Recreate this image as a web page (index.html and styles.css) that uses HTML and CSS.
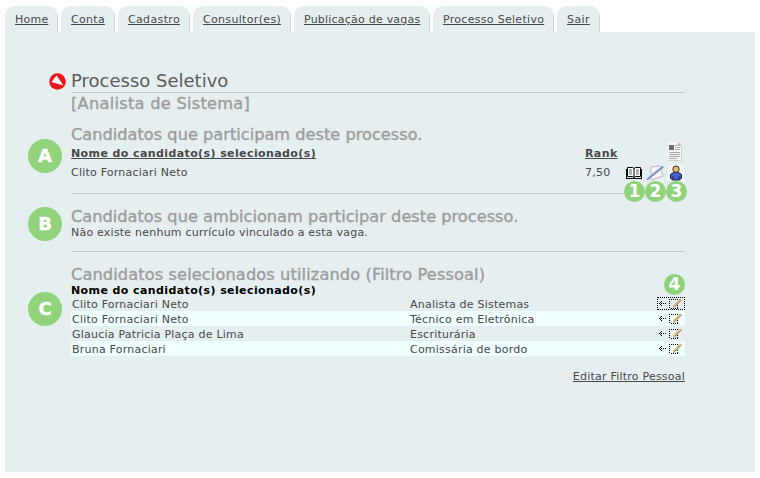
FILE: index.html
```html
<!DOCTYPE html>
<html lang="pt-BR">
<head>
<meta charset="utf-8">
<title>Processo Seletivo</title>
<link rel="stylesheet" href="styles.css">
</head>
<body>
<svg class="defs" width="0" height="0">
  <symbol id="book" viewBox="0 0 16 14">
    <path d="M1.500 1.500h5l1.500 1 1.500-1h5v9h-5l-1.500 1-1.500-1h-5z" fill="#fff" stroke="#000"/>
    <path d="M8 2v10M15.500 3v9.500M.5 3v9.500M0 12.500h16" stroke="#000"/>
    <path d="M3 4h3M3 6h3M3 8h3M10 4h3M10 6h3M10 8h3" stroke="#666"/>
  </symbol>
  <symbol id="write" viewBox="0 0 18 16">
    <path d="M5 2l9-1 3 10-12 4z" fill="#faf4f8" stroke="#bdb9c6"/>
    <path d="M1 14.500L17 1.500" stroke="#5f6dac" stroke-width="2"/>
    <path d="M1 14L16.500 1.300" stroke="#cfd7fa" stroke-width=".8"/>
  </symbol>
  <symbol id="person" viewBox="0 0 16 16">
    <rect width="16" height="16" fill="#f1f5f6"/>
    <path d="M2.500 13V9.500l3-2h5l3 2V13l-2 2h-7z" fill="#4a62c8" stroke="#101838"/>
    <circle cx="8" cy="4.200" r="3.200" fill="#e9b87c" stroke="#4a3018"/>
    <path d="M5 11v4M11 11v4" stroke="#16205c"/>
  </symbol>
  <symbol id="doc" viewBox="0 0 16 19">
    <path d="M1 0h10l4 4v14.500H1z" fill="#f6f6f6"/>
    <path d="M14.500 4v14.500H1" fill="none" stroke="#d0d0d0"/>
    <path d="M11 0v4h4z" fill="#b5b5b5"/>
    <path d="M2 3h5v5H2z" fill="#6c6c6c"/>
    <path d="M8 3.500h3M8 5.500h5M8 7.500h5M2 10.500h11M2 12.500h11M2 14.500h11M2 16.500h8" stroke="#aaa"/>
  </symbol>
  <symbol id="edit" viewBox="0 0 28 13">
    <g shape-rendering="crispEdges" fill="none" stroke="#000">
      <path d="M4 4.500h1M3 5.500h1M2 6.500h1M3 7.500h1M4 8.500h1M4 6.500h1M6 6.500h1M8 6.500h1"/>
      <path d="M12.500 2v10M14 2.500h7M14 11.500h7M20.500 8v3" stroke-dasharray="1 1"/>
    </g>
    <path d="M16.500 10.500L24.500 2.500" stroke="#999" stroke-width="1.600"/>
    <path d="M16.500 9.300L23.500 2" stroke="#e5b45c" stroke-width="1.600"/>
  </symbol>
</svg>
<nav class="tabs">
  <a class="tab home" href="#">Home</a>
  <a class="tab conta" href="#">Conta</a>
  <a class="tab cadastro" href="#">Cadastro</a>
  <a class="tab consultor" href="#">Consultor(es)</a>
  <a class="tab vagas" href="#">Publicação de vagas</a>
  <a class="tab processo" href="#">Processo Seletivo</a>
  <a class="tab sair" href="#">Sair</a>
</nav>
<main class="panel">
  <h1 class="title"><svg class="logo" viewBox="0 0 17 17"><circle cx="8.500" cy="8.500" r="8.300" fill="#f0141e"/><path d="M7.500 2.500L14.500 12.500 2.500 9z" fill="#fff"/></svg><span>Processo Seletivo</span></h1>
  <h2 class="heading job"><span>[Analista de Sistema]</span></h2>
  <section class="block first">
    <b class="badge">A</b>
    <h2 class="heading h-a"><span>Candidatos que participam deste processo.</span></h2>
    <div class="row head"><a class="name" href="#">Nome do candidato(s) selecionado(s)</a><a class="rank" href="#">Rank</a><svg class="doc" width="16" height="19"><use href="#doc"/></svg></div>
    <div class="row person"><span class="name">Clito Fornaciari Neto</span><span class="rank">7,50</span>
      <span class="icons"><svg width="16" height="14"><use href="#book"/></svg><svg width="18" height="16"><use href="#write"/></svg><svg width="16" height="16"><use href="#person"/></svg></span></div>
    <div class="numbers"><b>1</b><b>2</b><b>3</b></div>
  </section>
  <section class="block second">
    <b class="badge">B</b>
    <h2 class="heading h-b"><span>Candidatos que ambicionam participar deste processo.</span></h2>
    <p class="empty">Não existe nenhum currículo vinculado a esta vaga.</p>
  </section>
  <section class="block third">
    <b class="badge">C</b>
    <h2 class="heading h-c"><span>Candidatos selecionados utilizando (Filtro Pessoal)</span></h2>
    <div class="subhead">Nome do candidato(s) selecionado(s)</div>
    <div class="list">
      <div class="item"><span class="c1">Clito Fornaciari Neto</span><span class="c2">Analista de Sistemas</span><svg class="focus" width="28" height="13"><use href="#edit"/></svg></div>
      <div class="item"><span class="c1">Clito Fornaciari Neto</span><span class="c2">Técnico em Eletrônica</span><svg width="28" height="13"><use href="#edit"/></svg></div>
      <div class="item"><span class="c1">Glaucia Patricia Plaça de Lima</span><span class="c2">Escriturária</span><svg width="28" height="13"><use href="#edit"/></svg></div>
      <div class="item"><span class="c1">Bruna Fornaciari</span><span class="c2">Comissária de bordo</span><svg width="28" height="13"><use href="#edit"/></svg></div>
    </div>
    <b class="four">4</b>
    <a class="filter" href="#">Editar Filtro Pessoal</a>
  </section>
</main>
</body>
</html>
```
FILE: styles.css
```css
* { box-sizing: border-box; }
body { margin: 0; padding: 6px 5px; height: 478px; background: #fff; color: #484848; font: 11px/15px "DejaVu Sans", Verdana, sans-serif; letter-spacing: .22px; white-space: nowrap; }
a { color: #484848; text-decoration: underline; }
h1, h2, p { margin: 0; font-weight: normal; }
svg { display: block; }
.defs { position: absolute; }
.tabs { display: flex; gap: 3px; height: 26px; }
.tab { height: 26px; padding: 6px 0 0 10px; background: linear-gradient(#c5d8d7, #c5d8d7) right bottom / 1px 19px no-repeat #e6eff0; border-radius: 10px 10px 0 0; }
.home { width: 53px; }
.conta { width: 54px; letter-spacing: .3px; }
.cadastro { width: 72px; letter-spacing: .35px; }
.consultor { width: 98px; letter-spacing: .33px; }
.vagas { width: 136px; }
.processo { width: 121px; letter-spacing: .3px; }
.sair { width: 43px; letter-spacing: .4px; }
.panel { width: 750px; height: 440px; padding: 37px 70px 0 66px; background: #e6eff0; }
.title { position: relative; height: 24px; border-bottom: 1px solid #c4c8c8; color: #5c5c5c; font-size: 18px; line-height: 24px; letter-spacing: 0; }
.logo { position: absolute; left: -22px; top: 4px; width: 17px; height: 17px; }
.heading { color: #9d9d9d; font-size: 15px; line-height: 18px; height: 18px; letter-spacing: 0; -webkit-text-stroke: .35px #9d9d9d; }
.heading span { display: inline-block; transform: scaleX(1.08); transform-origin: 0 50%; }
.job { margin-top: 2px; letter-spacing: .25px; }
.h-c { letter-spacing: .1px; }
.block { position: relative; }
.first { margin-top: 13px; height: 68px; border-bottom: 1px solid #c4c8c8; }
.badge { position: absolute; left: -43px; top: 13px; width: 34px; height: 34px; border-radius: 50%; background: #90d37b; color: #fff; font-size: 18px; line-height: 33px; letter-spacing: 0; text-align: center; -webkit-text-stroke: .4px #fff; }
.third .badge { top: 40px; }
.row { display: flex; position: relative; }
.head { font-weight: bold; height: 21px; padding-top: 2px; letter-spacing: .4px; }
.row .name { width: 514px; }
.row .rank { width: 40px; }
.doc { margin-left: 42px; margin-top: -4px; }
.icons { display: flex; gap: 4px; align-items: center; height: 16px; margin-left: 1px; }
.numbers { position: absolute; right: -2px; top: 55px; display: flex; }
.numbers b, .four { width: 21px; height: 21px; border-radius: 50%; background: #90d37b; color: #fff; font-size: 17px; line-height: 21px; letter-spacing: 0; text-align: center; }
.second { height: 58px; padding-top: 14px; border-bottom: 1px solid #c4c8c8; }
.second .heading, .third .heading { height: 17px; }
.third { padding-top: 14px; }
.subhead { color: #000; font-weight: bold; height: 13px; letter-spacing: .4px; }
.item { display: flex; height: 15px; padding: 1px 0 0 1px; }
.item:nth-child(even) { background: #f0ffff; }
.c1 { width: 338px; }
.c2 { flex: 1; }
.focus { outline: 1px dotted #000; outline-offset: -1px; }
.four { position: absolute; right: 0; top: 22px; }
.filter { display: block; width: max-content; margin: 13px 0 0 auto; }
```
